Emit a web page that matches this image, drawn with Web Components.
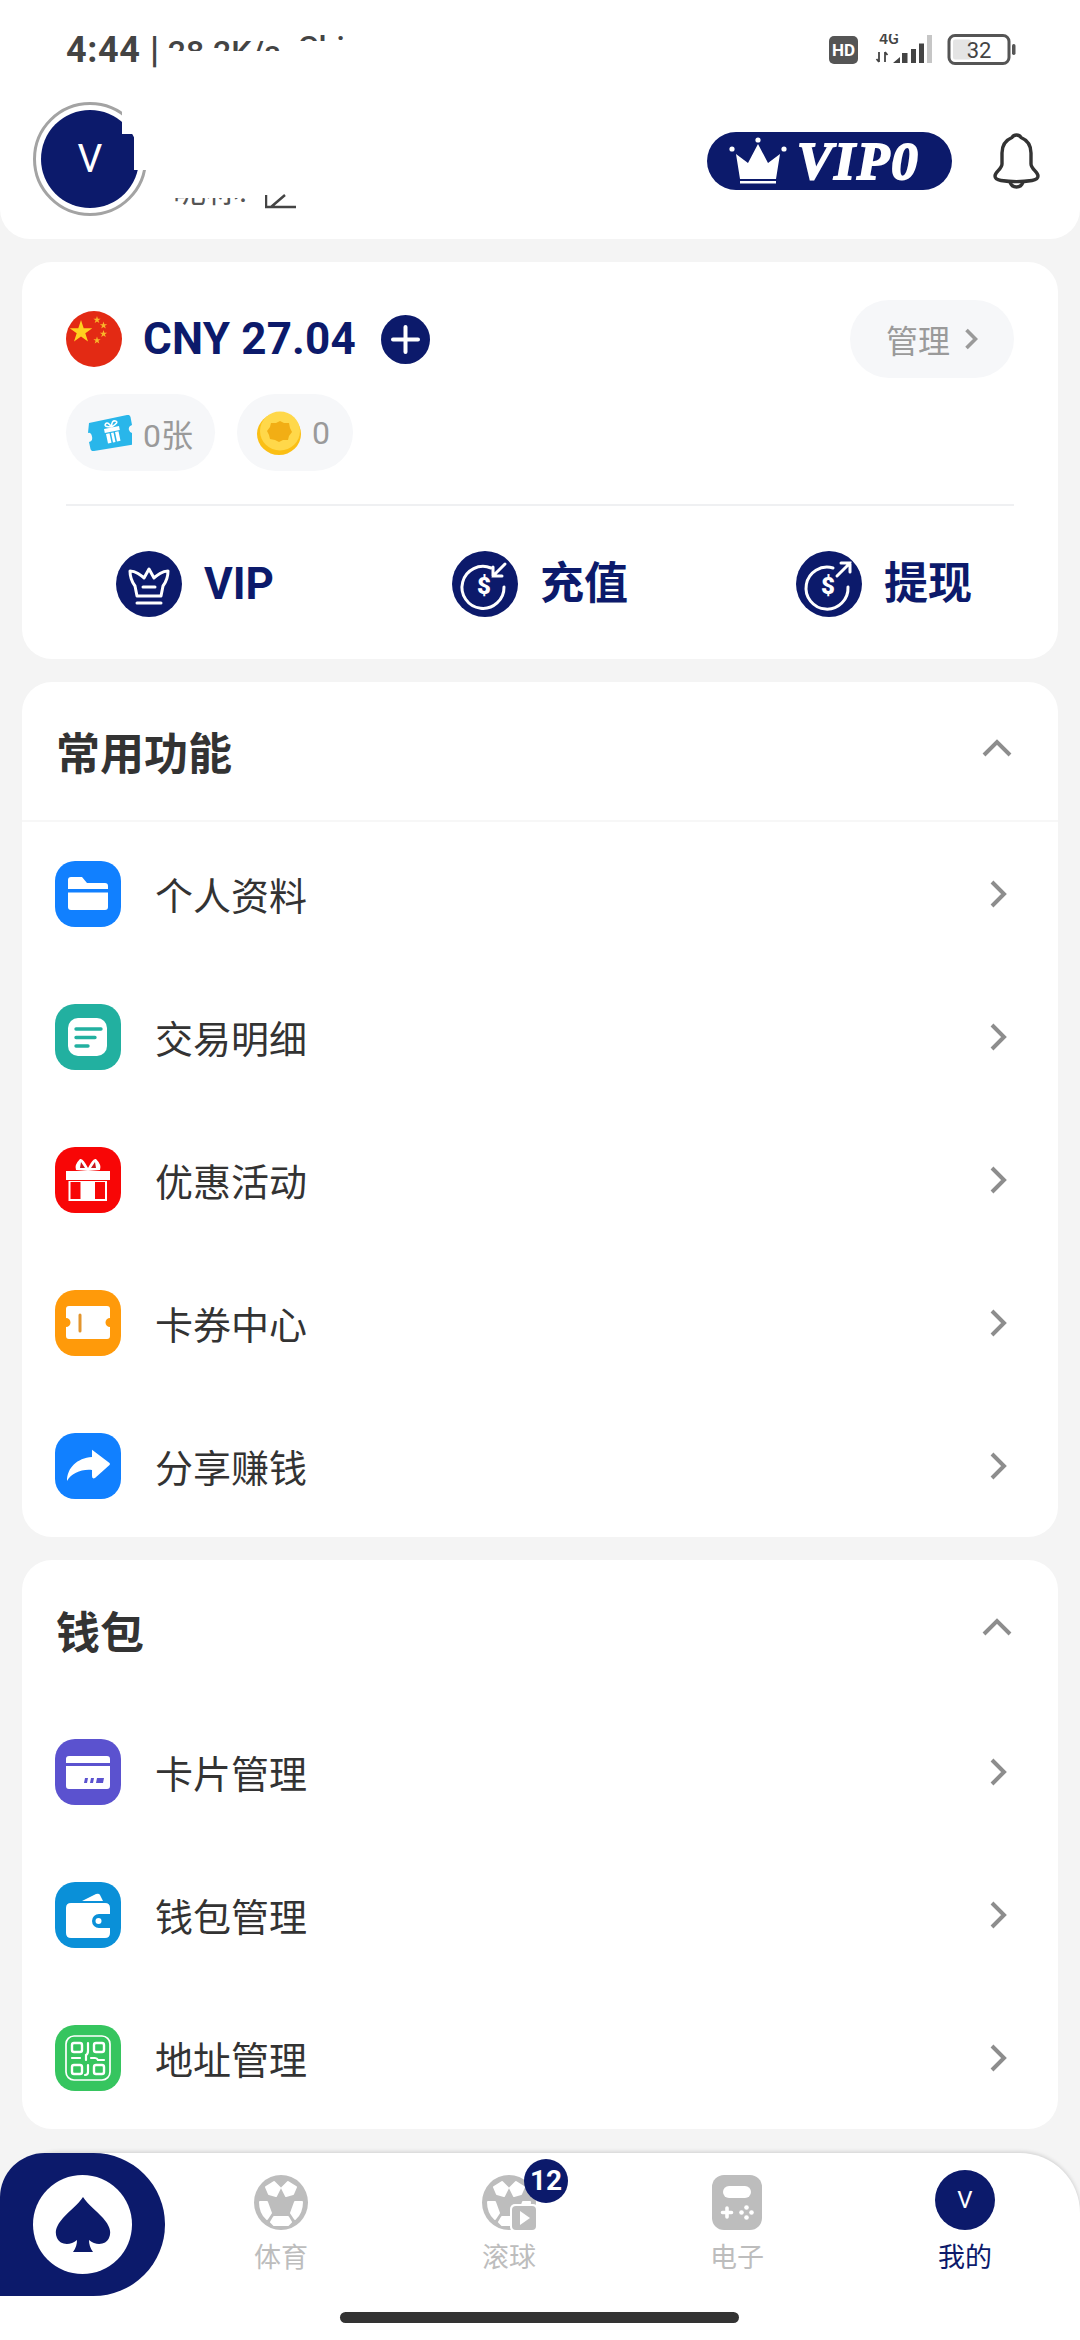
<!DOCTYPE html>
<html lang="zh">
<head>
<meta charset="utf-8">
<title>我的</title>
<style>
  html, body { margin: 0; padding: 0; background: #f4f4f4; }
  body { width: 1080px; height: 2340px; overflow: hidden; font-family: Roboto, "Noto Sans CJK SC", sans-serif; color: #333; }
  my-page { height: 2340px; }
</style>
</head>
<body>
<script>
const NAVY = '#0c1a6b';

const MENU_ICONS = {
  folder: `<path fill="#fff" d="M16 16h11l5 6h18q3 0 3 3v3H13v-9q0-3 3-3z"/><path fill="#fff" d="M13 31.5h40V46q0 3-3 3H16q-3 0-3-3z"/>`,
  doc: `<rect x="13" y="14" width="39" height="38" rx="10" fill="#fff"/><path stroke="#22b0a0" stroke-width="3.4" stroke-linecap="round" fill="none" d="M21 25h25M21 33.5h19M21 42h12"/>`,
  gift: `<path fill="#fff" d="M11 24h44v9H11zM13.5 34H52v20H13.5z"/><path fill="#f80606" d="M15.5 35h10v17h-10zM40 35h10v17H40z"/><path fill="#fff" d="M33 24l-12-1q-2-5 4-11 3-1 8 9 5-10 8-9 6 6 4 11z"/><path fill="#c9161c" d="M25 21l1-6 4 6zM41 21l-1-6-4 6z"/>`,
  ticket: `<path fill="#fff" d="M14 16h38q3 0 3 3v9a4.5 4.5 0 0 0 0 9v9q0 3-3 3H14q-3 0-3-3v-9a4.5 4.5 0 0 0 0-9v-9q0-3 3-3z"/><path stroke="#e3952d" stroke-width="3" stroke-linecap="round" d="M25 25v16"/>`,
  share: `<path fill="#fff" d="M38 17.5L54.5 30q1 1 0 2L40 45q-3 1.5-3-2v-6c-11-1-20 3-25 11 0-13 10-23 25-24v-5q0-3.5 1-1.5z"/>`,
  card: `<path fill="#fff" d="M14 17h38q3 0 3 3v4H11v-4q0-3 3-3zM11 27h44v20q0 3-3 3H14q-3 0-3-3z"/><path fill="#5b52cf" d="M30 39h3l-1 5h-3zM36 39h3l-1 5h-3zM42 39h7l-1 5h-7z"/>`,
  wallet: `<path fill="#fff" d="M27 19l14-7q3-1 4 1l3 6z"/><path fill="#fff" d="M16 21h34q5 0 5 5v6H44a7 7 0 0 0 0 14h11v5q0 5-5 5H16q-5 0-5-5V26q0-5 5-5z"/><circle cx="43.5" cy="39" r="3" fill="#fff"/>`,
  qr: `<g fill="none" stroke="#fff" stroke-width="1.7"><rect x="11" y="11" width="44" height="44" rx="8"/><rect x="17" y="18" width="10" height="9" rx="2" stroke-width="2.4"/><rect x="39" y="18" width="10" height="9" rx="2" stroke-width="2.4"/><rect x="17" y="40" width="10" height="9" rx="2" stroke-width="2.4"/><rect x="39" y="40" width="10" height="9" rx="2" stroke-width="2.4"/><path stroke-width="2.2" stroke-linecap="round" d="M33 18v8q0 3-2 4v5M17 33h8M36 33h4q2 0 3 2h6M33 40v7q0 3-3 3"/></g>`
};

class MyAvatar extends HTMLElement {
  constructor() {
    super();
    this.attachShadow({ mode: 'open' });
    const size = this.getAttribute('size') || 60;
    this.shadowRoot.innerHTML = `
      <style>
        :host { display: flex; align-items: center; justify-content: center; width: ${size}px; height: ${size}px; border-radius: 50%; background: ${NAVY}; color: #fff; font-size: ${Math.round(size * 0.4)}px; }
      </style>
      <slot></slot>
    `;
  }
}
customElements.define('my-avatar', MyAvatar);

class StatusBar extends HTMLElement {
  constructor() {
    super();
    this.attachShadow({ mode: 'open' });
    this.shadowRoot.innerHTML = `
      <style>
        :host { display: flex; align-items: flex-start; height: 100px; padding: 34px 63px 0 66px; box-sizing: border-box; color: #444; }
        .time { font-size: 36px; font-weight: 700; line-height: 32px; height: 32px; white-space: pre; letter-spacing: 0.6px; }
        .clip { overflow: hidden; font-size: 32px; font-weight: 500; white-space: pre; line-height: 36px; }
        .speed { height: 17px; margin-left: 8px; width: 124px; }
        .carrier { height: 12px; margin-left: 6px; width: 90px; margin-top: -5px; }
        .right { margin-left: auto; display: flex; align-items: center; }
        svg { display: block; }
      </style>
      <div class="time">4:44 |</div>
      <div class="clip speed">28.2K/s</div>
      <div class="clip carrier">China</div>
      <div class="right">
        <svg width="188" height="32" viewBox="0 0 188 32">
          <rect x="0" y="2" width="29" height="28" rx="5" fill="#555"/>
          <text x="14.5" y="22" text-anchor="middle" font-family="Roboto" font-weight="700" font-size="17" fill="#fff">HD</text>
          <text x="60" y="10" text-anchor="middle" font-family="Roboto" font-weight="500" font-size="16" fill="#444">4G</text>
          <path d="M50 18v10M47.500 25l2.500 3M56 28V18M56 18l2.500 3" stroke="#444" stroke-width="1.800" fill="none"/>
          <path d="M64 29l7-6v6zM73 19h5.500v10H73zM82 15h5v14h-5zM90 9.500h5V29h-5z" fill="#444"/>
          <rect x="98" y="1" width="5" height="28" fill="#c6c6c6"/>
          <rect x="120" y="1.500" width="60" height="28" rx="6" fill="none" stroke="#555" stroke-width="3"/>
          <rect x="124" y="5.500" width="18" height="20" rx="2" fill="#e4e4e4"/>
          <text x="150" y="24" text-anchor="middle" font-family="Roboto" font-size="22" fill="#444">32</text>
          <rect x="183" y="10" width="3.500" height="11" rx="1.700" fill="#555"/>
        </svg>
      </div>
    `;
  }
}
customElements.define('status-bar', StatusBar);

class ProfileHeader extends HTMLElement {
  constructor() {
    super();
    this.attachShadow({ mode: 'open' });
    this.shadowRoot.innerHTML = `
      <style>
        :host { display: block; height: 239px; background: #fff; border-radius: 0 0 30px 30px; box-sizing: border-box; }
        .row { display: flex; align-items: flex-start; height: 139px; padding: 2px 40px 0 33px; box-sizing: border-box; position: relative; }
        .ring { width: 114px; height: 114px; border: 3px solid #a3a3a3; border-radius: 50%; box-sizing: border-box; display: flex; align-items: center; justify-content: center; flex: none; }
        .patch { position: absolute; background: #fff; }
        .nick { margin: 94px 0 0 26px; display: flex; align-items: flex-end; height: 14px; }
        .nick-text { height: 12px; overflow: hidden; font-size: 33px; line-height: 40px; color: #555; width: 92px; white-space: nowrap; }
        .nick-text span { display: block; margin-top: -27px; }
        .vip { margin-left: auto; margin-top: 30px; display: flex; align-items: center; width: 245px; height: 58px; background: ${NAVY}; border-radius: 29px; box-sizing: border-box; padding-left: 22px; color: #fff; }
        .vip span { font-family: "Liberation Serif", serif; font-style: italic; font-weight: 700; font-size: 53px; line-height: 58px; margin-left: 10px; -webkit-text-stroke: 2px #fff; letter-spacing: 2px; }
        .bell { margin: 30px 0 0 41px; display: block; }
      </style>
      <status-bar></status-bar>
      <div class="row">
        <div class="ring"><my-avatar size="98">V</my-avatar></div>
        <div class="patch" style="left:122px;top:0;width:30px;height:34px"></div>
        <div class="patch" style="left:134px;top:34px;width:18px;height:36px"></div>
        <div class="nick">
          <div class="nick-text"><span>昵称:</span></div>
          <svg width="34" height="16" viewBox="0 0 34 16" style="display:block">
            <path d="M1 1v12h30M6 13L20 1" fill="none" stroke="#444" stroke-width="2.500"/>
          </svg>
        </div>
        <div class="vip">
          <svg width="58" height="50" viewBox="0 0 58 50">
            <path fill="#fff" d="M7 18l12 9L29 8l10 19 12-9-4 25H11z"/>
            <circle cx="3" cy="13" r="2.600" fill="#fff"/><circle cx="29" cy="4" r="2.600" fill="#fff"/><circle cx="55" cy="13" r="2.600" fill="#fff"/>
            <rect x="11" y="45" width="36" height="2.500" fill="#fff"/>
          </svg>
          <span>VIP0</span>
        </div>
        <svg class="bell" width="47" height="57" viewBox="0 0 47 57" fill="none" stroke="#333" stroke-width="3.400" stroke-linejoin="round">
          <path d="M23.500 3q3 0 4.500 2.500C34 8 38 13 38 21v11c0 5 7 8 7 12 0 3-3 4-6 4.500-10 1.500-21 1.500-31 0-3-.5-6-1.500-6-4.500 0-4 7-7 7-12V21c0-8 4-13 10-15.500Q20.500 3 23.500 3z"/>
          <path d="M17 50q1.500 5 6.500 5t6.500-5"/>
        </svg>
      </div>
    `;
  }
}
customElements.define('profile-header', ProfileHeader);

class WalletAction extends HTMLElement {
  constructor() {
    super();
    this.attachShadow({ mode: 'open' });
    this.shadowRoot.innerHTML = `
      <style>
        :host { display: flex; align-items: center; gap: 22px; color: ${NAVY}; font-size: 44px; font-weight: 700; line-height: 66px; }
        .icon { width: 66px; height: 66px; border-radius: 50%; background: ${NAVY}; flex: none; }
      </style>
      <div class="icon"><slot name="icon"></slot></div>
      <slot></slot>
    `;
  }
}
customElements.define('wallet-action', WalletAction);

class WalletCard extends HTMLElement {
  constructor() {
    super();
    this.attachShadow({ mode: 'open' });
    this.shadowRoot.innerHTML = `
      <style>
        :host { display: block; background: #fff; border-radius: 30px; padding: 38px 44px 0; height: 397px; box-sizing: border-box; }
        .top { display: flex; align-items: center; height: 78px; }
        .amount { color: ${NAVY}; font-size: 44px; font-weight: 700; margin: 0 25px 0 21px; letter-spacing: 0.2px; }
        .pill { display: flex; align-items: center; background: #f6f7f9; border-radius: 39px; color: #9a9a9a; font-size: 32px; }
        .manage { margin-left: auto; width: 164px; height: 78px; justify-content: center; gap: 14px; }
        .chips { display: flex; gap: 22px; margin-top: 16px; }
        .chip { height: 77px; gap: 11px; box-sizing: border-box; }
        .ticket { width: 149px; padding-left: 22px; }
        .coin { width: 116px; padding-left: 20px; }
        hr { border: 0; border-top: 2px solid #eff0f2; margin: 33px 0 0; }
        .actions { display: grid; grid-template-columns: 336px 344px auto; padding-left: 50px; margin-top: 45px; }
        svg { display: block; flex: none; }
      </style>
      <div class="top">
        <svg width="56" height="56" viewBox="0 0 56 56">
          <circle cx="28" cy="28" r="28" fill="#e32a14"/>
          <path fill="#ffd21f" d="M15 9l2.700 8.200h8.600l-7 5 2.700 8.200-7-5-7 5 2.700-8.200-7-5h8.600z"/>
          <path fill="#f8b62a" d="M31 5l.9 2.700h2.800l-2.300 1.600.9 2.700-2.300-1.600-2.300 1.600.9-2.700-2.300-1.600h2.800zM37.500 10.500l.9 2.700h2.800l-2.300 1.600.9 2.700-2.300-1.600-2.300 1.600.9-2.700-2.300-1.600h2.800zM37.500 19l.9 2.700h2.800l-2.300 1.600.9 2.700-2.300-1.600-2.300 1.600.9-2.700-2.300-1.600h2.800zM31 25.500l.9 2.700h2.800l-2.300 1.600.9 2.700-2.300-1.600-2.300 1.600.9-2.700-2.300-1.600h2.800z"/>
        </svg>
        <span class="amount">CNY 27.04</span>
        <svg width="49" height="49" viewBox="0 0 49 49">
          <circle cx="24.500" cy="24.500" r="24.500" fill="${NAVY}"/>
          <path d="M24.500 12v25M12 24.500h25" stroke="#fff" stroke-width="4" stroke-linecap="round"/>
        </svg>
        <div class="pill manage">管理
          <svg width="14" height="24" viewBox="0 0 14 24"><path d="M2.500 3l9 9-9 9" fill="none" stroke="#9a9a9a" stroke-width="3.600"/></svg>
        </div>
      </div>
      <div class="chips">
        <div class="pill chip ticket">
          <svg width="44" height="36" viewBox="0 0 44 36">
            <path fill="#29b6ea" d="M1 8l38-8q3-.5 3.500 2l1.500 8q-4 1.500-3 5t5 3l1.500 8q.5 3-2 3.500L6 36q-3 .5-3.500-2L1 27q4-1 3-5.500T0 18z"/>
            <path fill="#fff" d="M16 14l15-3 .8 4-15 3zM18 19l3.500-.7 2 9.500-3.500.7zM23 18l2.500-.5 2 9.500-2.500.5zM27 17l3.500-.7 2 9.500-3.500.7z"/>
            <path fill="none" stroke="#fff" stroke-width="1.500" d="M23.500 12q-4-6-6-3t6 3q0-7 4-6t-4 6"/>
          </svg>
          <span>0张</span>
        </div>
        <div class="pill chip coin">
          <svg width="44" height="44" viewBox="0 0 44 44">
            <ellipse cx="22" cy="23" rx="22" ry="21" fill="#fbbf14"/>
            <ellipse cx="23" cy="20" rx="20" ry="19.500" fill="#ffd84a"/>
            <path fill="#f2ae14" d="M23 10l4 2 5 0 1 5 2 4-3 4-1 4-5 0-4 2-4-2-5-1-1-4-2-4 3-4 1-4 5 0z"/>
          </svg>
          <span>0</span>
        </div>
      </div>
      <hr>
      <div class="actions">
        <wallet-action>
          <svg slot="icon" width="66" height="66" viewBox="0 0 66 66" fill="none" stroke="#fff" stroke-width="3" stroke-linejoin="round" stroke-linecap="round">
            <path d="M14 20q4 0 8 2.500t6 4.500l5-9 5 9q2-2 6-4.500t8-2.500c0 6-2 11-5 15l-2 10H21l-2-10c-3-4-5-9-5-15z"/>
            <path d="M27 36h12M21 52h24"/>
          </svg>
          VIP
        </wallet-action>
        <wallet-action>
          <svg slot="icon" width="66" height="66" viewBox="0 0 66 66" fill="none" stroke="#fff" stroke-width="3" stroke-linecap="round">
            <path d="M39 17a21 21 0 1 0 13 19"/>
            <path d="M53 13L41 25M41 16v9h9"/>
            <text x="32" y="43" text-anchor="middle" fill="#fff" stroke="none" font-family="Roboto" font-weight="900" font-size="24">$</text>
          </svg>
          充值
        </wallet-action>
        <wallet-action>
          <svg slot="icon" width="66" height="66" viewBox="0 0 66 66" fill="none" stroke="#fff" stroke-width="3" stroke-linecap="round">
            <path d="M37 17a21 21 0 1 0 15 19"/>
            <path d="M41 25L54 12M45 12h9v9"/>
            <text x="32" y="43" text-anchor="middle" fill="#fff" stroke="none" font-family="Roboto" font-weight="900" font-size="24">$</text>
          </svg>
          提现
        </wallet-action>
      </div>
    `;
  }
}
customElements.define('wallet-card', WalletCard);

class MenuSection extends HTMLElement {
  constructor() {
    super();
    this.attachShadow({ mode: 'open' });
    const line = this.hasAttribute('divider') ? '2px solid #f7f7f7' : '0';
    this.shadowRoot.innerHTML = `
      <style>
        :host { display: block; background: #fff; border-radius: 30px; }
        header { display: flex; align-items: center; justify-content: space-between; height: 140px; box-sizing: border-box; padding: 0 45px 0 34px; border-bottom: ${line}; }
        h2 { margin: 0; font-size: 44px; font-weight: 700; color: #333; }
      </style>
      <header>
        <h2>${this.getAttribute('title')}</h2>
        <svg width="32" height="20" viewBox="0 0 32 20" style="margin-bottom:6px"><path d="M3 17L16 4l13 13" fill="none" stroke="#8d8d8d" stroke-width="4"/></svg>
      </header>
      <slot></slot>
    `;
  }
}
customElements.define('menu-section', MenuSection);

class MenuRow extends HTMLElement {
  constructor() {
    super();
    this.attachShadow({ mode: 'open' });
    const color = this.getAttribute('color');
    const icon = MENU_ICONS[this.getAttribute('icon')];
    this.shadowRoot.innerHTML = `
      <style>
        :host { display: flex; align-items: center; height: 143px; padding: 0 50px 0 33px; font-size: 38px; color: #333; }
        .icon { width: 66px; height: 66px; border-radius: 20px; flex: none; margin-right: 34px; display: block; }
        .go { margin-left: auto; display: block; }
      </style>
      <svg class="icon" viewBox="0 0 66 66" style="background:${color}">${icon}</svg>
      <slot></slot>
      <svg class="go" width="20" height="30" viewBox="0 0 20 30"><path d="M4 3l12 12L4 27" fill="none" stroke="#8d8d8d" stroke-width="4"/></svg>
    `;
  }
}
customElements.define('menu-row', MenuRow);

class TabItem extends HTMLElement {
  constructor() {
    super();
    this.attachShadow({ mode: 'open' });
    this.shadowRoot.innerHTML = `
      <style>
        :host { display: flex; flex-direction: column; align-items: center; position: relative; color: #bdbdbd; font-size: 27px; line-height: 40px; }
        :host([active]) { color: ${NAVY}; }
        .icon { height: 60px; display: flex; align-items: flex-end; margin-bottom: 8px; }
        .badge { position: absolute; left: 129px; top: -11px; width: 44px; height: 44px; border-radius: 50%; background: ${NAVY}; color: #fff; font-size: 28px; font-weight: 700; line-height: 44px; text-align: center; }
        .badge:empty { display: none; }
      </style>
      <div class="icon"><slot name="icon"></slot></div>
      <slot></slot>
      <div class="badge">${this.getAttribute('badge') || ''}</div>
    `;
  }
}
customElements.define('tab-item', TabItem);

const BALL = `
  <ellipse cx="27" cy="27.500" rx="27" ry="27.500" fill="#bdbdbd"/>
  <g fill="#fff" stroke="#fff" stroke-width="2" stroke-linejoin="round">
    <path d="M12 12l8-5 6 6-4 8-7-2zM42 12l-8-5-6 6 4 8 7-2zM6 27l7 0 4 11-4 6q-7-6-7-17zM48 27l-7 0-4 11 4 6q7-6 7-17zM20 42h14l3 5-3 3H20l-3-3z"/>
  </g>`;

class TabBar extends HTMLElement {
  constructor() {
    super();
    this.attachShadow({ mode: 'open' });
    this.shadowRoot.innerHTML = `
      <style>
        :host { display: flex; flex-direction: column; position: relative; height: 187px; background: #fff; border-radius: 60px 60px 0 0; box-shadow: 0 -1px 4px rgba(0,0,0,0.16); box-sizing: border-box; padding-top: 17px; }
        .tabs { display: grid; grid-template-columns: repeat(4, 228px); padding-left: 167px; }
        .home { position: absolute; left: 0; top: 0; width: 165px; height: 143px; background: ${NAVY}; border-radius: 45px 72px 72px 0; display: flex; align-items: center; padding-left: 33px; box-sizing: border-box; }
        .disc { width: 99px; height: 99px; border-radius: 50%; background: #fff; display: flex; align-items: center; justify-content: center; }
        .indicator { width: 399px; height: 11px; border-radius: 6px; background: #333; margin: auto 0 17px 340px; }
        svg { display: block; }
      </style>
      <div class="home">
        <div class="disc">
          <svg width="56" height="56" viewBox="0 0 56 56">
            <path fill="${NAVY}" d="M28 0c5 8 13 13 20 21 6 7 9 13 6 20-3 7-13 8-20 2 0 4 1 8 4 12H18c3-4 4-8 4-12-7 6-17 5-20-2-3-7 0-13 6-20C15 13 23 8 28 0z"/>
          </svg>
        </div>
      </div>
      <div class="tabs"><slot></slot></div>
      <div class="indicator"></div>
    `;
  }
}
customElements.define('tab-bar', TabBar);

class MyPage extends HTMLElement {
  constructor() {
    super();
    this.attachShadow({ mode: 'open' });
    this.shadowRoot.innerHTML = `
      <style>
        :host { display: flex; flex-direction: column; }
        main { display: flex; flex-direction: column; gap: 23px; padding: 23px 22px 0; flex: 1; }
      </style>
      <profile-header></profile-header>
      <main>
        <wallet-card></wallet-card>
        <slot></slot>
      </main>
      <slot name="tabs"></slot>
    `;
  }
}
customElements.define('my-page', MyPage);

document.body.insertAdjacentHTML('afterbegin', `
  <my-page>
    <menu-section title="常用功能" divider>
      <menu-row icon="folder" color="#1180ff">个人资料</menu-row>
      <menu-row icon="doc" color="#22b0a0">交易明细</menu-row>
      <menu-row icon="gift" color="#f80606">优惠活动</menu-row>
      <menu-row icon="ticket" color="#ff9a0a">卡券中心</menu-row>
      <menu-row icon="share" color="#1180ff">分享赚钱</menu-row>
    </menu-section>
    <menu-section title="钱包">
      <menu-row icon="card" color="#5b52cf">卡片管理</menu-row>
      <menu-row icon="wallet" color="#0a90d8">钱包管理</menu-row>
      <menu-row icon="qr" color="#36c55f">地址管理</menu-row>
    </menu-section>
    <tab-bar slot="tabs">
      <tab-item>
        <svg slot="icon" width="54" height="55" viewBox="0 0 54 55">${BALL}</svg>
        体育
      </tab-item>
      <tab-item badge="12">
        <svg slot="icon" width="54" height="55" viewBox="0 0 54 55">
          ${BALL}
          <rect x="28" y="29" width="28" height="28" rx="5" fill="#fff"/>
          <rect x="30" y="31" width="24" height="24" rx="4" fill="#bdbdbd"/>
          <path d="M38 36l10 7-10 7z" fill="#fff"/>
        </svg>
        滚球
      </tab-item>
      <tab-item>
        <svg slot="icon" width="50" height="55" viewBox="0 0 50 55">
          <rect width="50" height="55" rx="12" fill="#bdbdbd"/>
          <rect x="11" y="11" width="28" height="12" rx="6" fill="#fff"/>
          <path d="M15 33v9M10.500 37.500h9" stroke="#fff" stroke-width="3.600" stroke-linecap="round"/>
          <g fill="#fff"><circle cx="34.500" cy="32.500" r="2.300"/><circle cx="34.500" cy="42.500" r="2.300"/><circle cx="29.500" cy="37.500" r="2.300"/><circle cx="39.500" cy="37.500" r="2.300"/></g>
        </svg>
        电子
      </tab-item>
      <tab-item active>
        <my-avatar slot="icon" size="60">V</my-avatar>
        我的
      </tab-item>
    </tab-bar>
  </my-page>
`);
</script>
</body>
</html>
